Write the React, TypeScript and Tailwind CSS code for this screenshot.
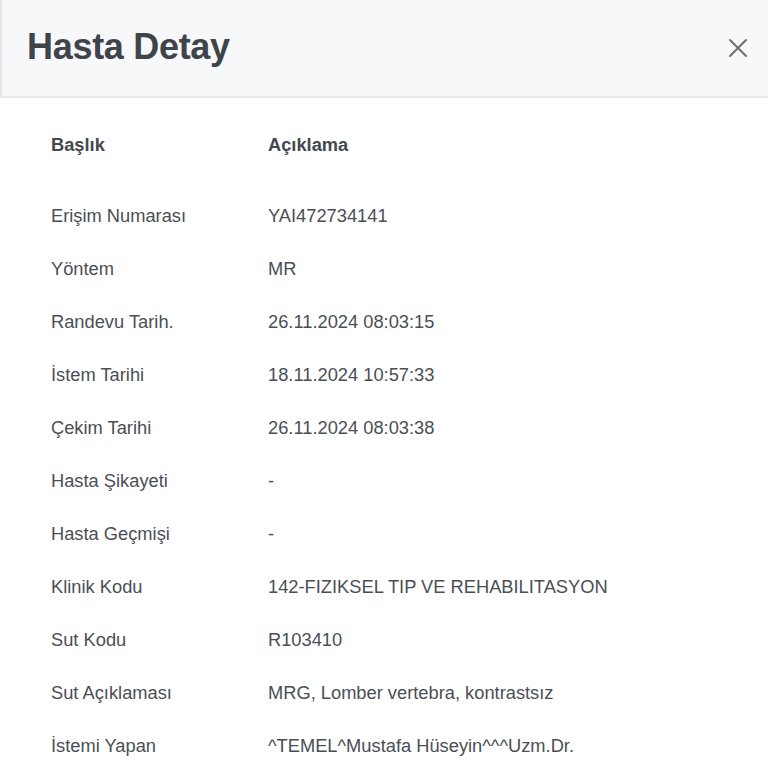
const rows: [string, string][] = [
  ['Erişim Numarası', 'YAI472734141'],
  ['Yöntem', 'MR'],
  ['Randevu Tarih.', '26.11.2024 08:03:15'],
  ['İstem Tarihi', '18.11.2024 10:57:33'],
  ['Çekim Tarihi', '26.11.2024 08:03:38'],
  ['Hasta Şikayeti', '-'],
  ['Hasta Geçmişi', '-'],
  ['Klinik Kodu', '142-FIZIKSEL TIP VE REHABILITASYON'],
  ['Sut Kodu', 'R103410'],
  ['Sut Açıklaması', 'MRG, Lomber vertebra, kontrastsız'],
  ['İstemi Yapan', '^TEMEL^Mustafa Hüseyin^^^Uzm.Dr.'],
]

export default function App() {
  return (
    <div className="w-[768px] h-[768px] overflow-hidden bg-white font-['Liberation_Sans',Arial,sans-serif] text-[#4a4f56]">
      <header className="h-[98px] flex items-center justify-between pl-[25px] pr-[15px] bg-[#f7f8fa] border-l-2 border-b-2 border-[#e6e7e9]">
        <h1 className="text-[36px] font-bold text-[#3f444b] tracking-[-0.3px] mt-[-3px]">Hasta Detay</h1>
        <button className="w-[30px] h-[30px] flex items-center justify-center text-[#6d7176]">
          <svg width="20" height="20" viewBox="0 0 20 20" fill="none" stroke="currentColor" strokeWidth="2" strokeLinecap="round">
            <path d="M2 2 L18 18 M18 2 L2 18" />
          </svg>
        </button>
      </header>

      <div className="pl-[51px] pt-[20px] text-[18.3px]">
        <div className="flex items-center h-[53px] font-bold text-[#43484f]">
          <div className="w-[217px]">Başlık</div>
          <div>Açıklama</div>
        </div>
        <div className="h-[18px]" />
        {rows.map(([k, v]) => (
          <div key={k} className="flex items-center h-[53px]">
            <div className="w-[217px]">{k}</div>
            <div>{v}</div>
          </div>
        ))}
      </div>
    </div>
  )
}
